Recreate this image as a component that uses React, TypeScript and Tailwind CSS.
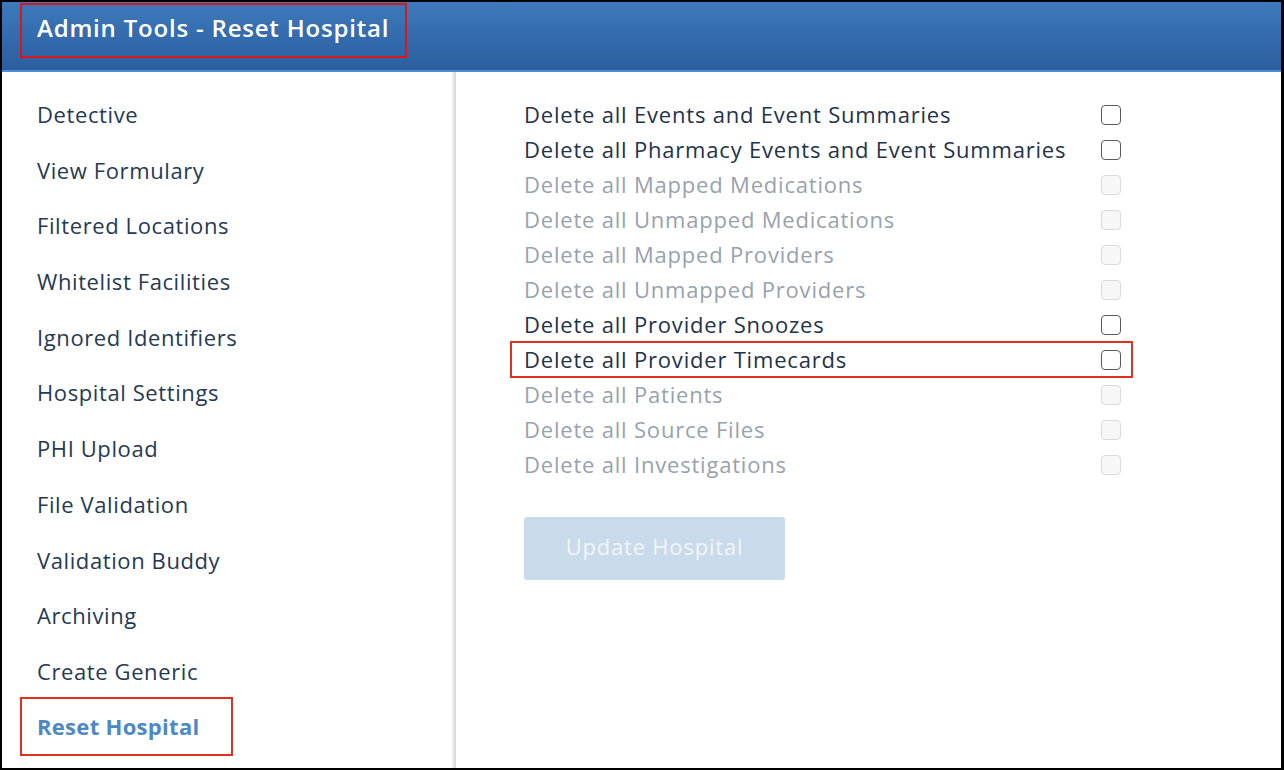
import React from 'react';

const navItems = [
  'Detective',
  'View Formulary',
  'Filtered Locations',
  'Whitelist Facilities',
  'Ignored Identifiers',
  'Hospital Settings',
  'PHI Upload',
  'File Validation',
  'Validation Buddy',
  'Archiving',
  'Create Generic',
];

const options = [
  { label: 'Delete all Events and Event Summaries', enabled: true },
  { label: 'Delete all Pharmacy Events and Event Summaries', enabled: true },
  { label: 'Delete all Mapped Medications', enabled: false },
  { label: 'Delete all Unmapped Medications', enabled: false },
  { label: 'Delete all Mapped Providers', enabled: false },
  { label: 'Delete all Unmapped Providers', enabled: false },
  { label: 'Delete all Provider Snoozes', enabled: true },
  { label: 'Delete all Provider Timecards', enabled: true, highlight: true },
  { label: 'Delete all Patients', enabled: false },
  { label: 'Delete all Source Files', enabled: false },
  { label: 'Delete all Investigations', enabled: false },
];

function Checkbox({ enabled }: { enabled: boolean }) {
  return (
    <span
      className={
        enabled
          ? 'block w-[20px] h-[20px] rounded-[4px] border border-[#5a5a5a] bg-white'
          : 'block w-[20px] h-[20px] rounded-[4px] border border-[#dadada] bg-[#f7f7f7]'
      }
    />
  );
}

export default function App() {
  return (
    <div className="h-[770px] w-[1284px] bg-black pt-[2px] pl-[2px] pr-[3px] pb-[2px] font-['Open_Sans',sans-serif]">
      <div className="flex h-full flex-col bg-white">
        {/* header */}
        <div className="h-[70px] shrink-0 bg-gradient-to-b from-[#3d7abb] to-[#2b5e9f] border-b-2 border-[#4d8fd2] pl-[18px] pt-[1px]">
          <div className="inline-flex h-[55px] w-[387px] items-center border-2 border-[#e0141b] pl-[15px] pb-[5px]">
            <span className="text-[24px] font-semibold tracking-[0.8px] text-white">Admin Tools - Reset Hospital</span>
          </div>
        </div>

        <div className="flex flex-1 min-h-0">
          {/* sidebar */}
          <div className="w-[450px] shrink-0 pt-[23px] pl-[35px]">
            {navItems.map((item) => (
              <div key={item} className="h-[55.7px] text-[22px] leading-[38px] tracking-[0.6px] text-[#253a52]">
                {item}
              </div>
            ))}
            <div className="-ml-[17px] -mt-[11px] flex h-[59px] w-[213px] items-center border-2 border-[#e0301e] pl-[15px]">
              <span className="text-[22px] font-bold tracking-[0.3px] text-[#4c87c6]">Reset Hospital</span>
            </div>
          </div>
          <div className="w-[4px] shrink-0 bg-gradient-to-r from-[#f2f2f2] to-[#d6d6d6]" />

          {/* content */}
          <div className="flex-1 pl-[68px] pt-[25px]">
            <div className="w-[597px]">
              {options.map((o) =>
                o.highlight ? (
                  <div
                    key={o.label}
                    className="-ml-[14px] flex h-[37px] w-[623px] items-center justify-between border-2 border-[#e0301e] pl-[12px] pr-[10px] -my-[1px]"
                  >
                    <span className="text-[22px] tracking-[0.8px] text-[#1f3349]">{o.label}</span>
                    <Checkbox enabled />
                  </div>
                ) : (
                  <div key={o.label} className="flex h-[35px] items-center justify-between">
                    <span
                      className={
                        o.enabled
                          ? 'text-[22px] tracking-[0.8px] text-[#1f3349]'
                          : 'text-[22px] tracking-[0.8px] text-[#98a2ad]'
                      }
                    >
                      {o.label}
                    </span>
                    <Checkbox enabled={o.enabled} />
                  </div>
                )
              )}
            </div>
            <button className="mt-[35px] h-[63px] w-[261px] rounded-[3px] bg-[#c9daea] pb-[4px] text-[22px] tracking-[0.8px] text-[#f1f5f9]">
              Update Hospital
            </button>
          </div>
        </div>
      </div>
    </div>
  );
}
